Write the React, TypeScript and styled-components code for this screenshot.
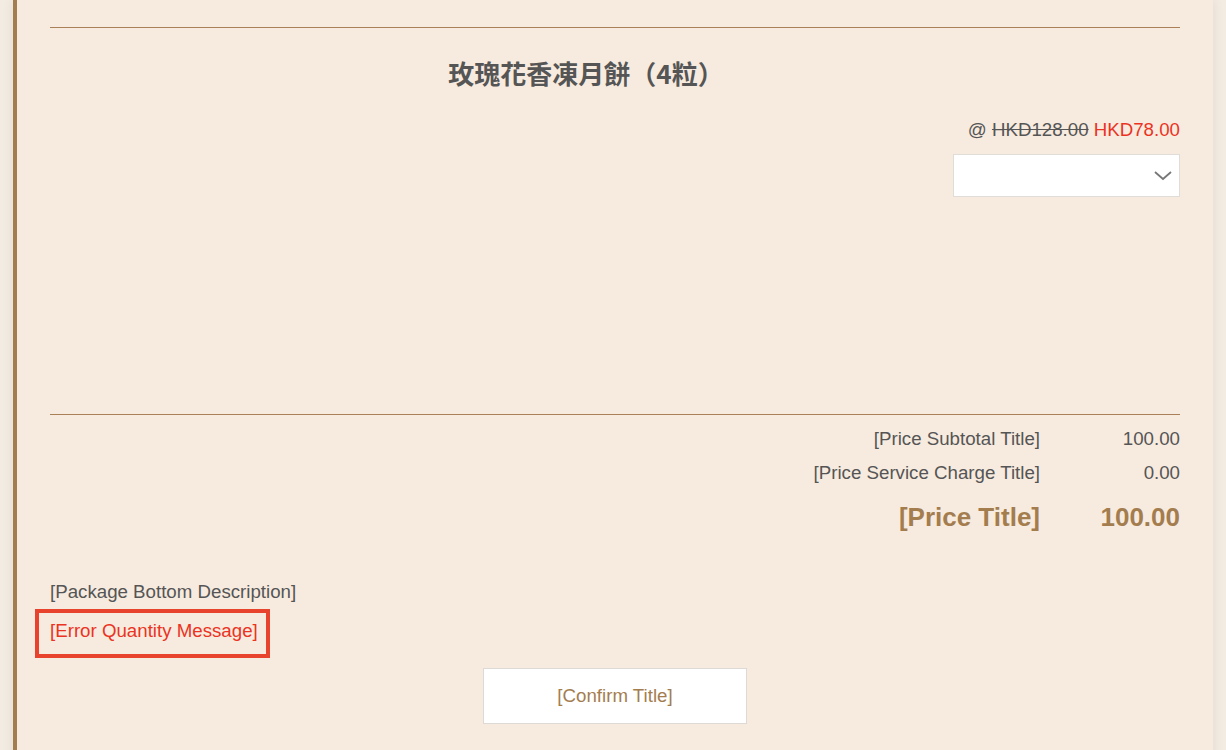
import React from 'react'
import styled, { createGlobalStyle } from 'styled-components'

const GlobalStyle = createGlobalStyle`
  html, body {
    margin: 0;
    padding: 0;
    background: #f3ece3;
    font-family: "Liberation Sans", Arial, "Noto Sans CJK TC", sans-serif;
    color: #555;
  }
`

const Shell = styled.div`
  width: 1226px;
  height: 750px;
  overflow: hidden;
  padding: 0 13px;
  box-sizing: border-box;
`

const Panel = styled.div`
  background: #f7ebdf;
  border-left: 4px solid #a47d4f;
  box-shadow: 0 0 10px rgba(120, 90, 50, 0.12);
  padding: 27px 33px 40px 33px;
  min-height: 750px;
  box-sizing: border-box;
`

const Divider = styled.hr`
  border: 0;
  border-top: 1px solid #a98058;
  margin: 0;
`

const ItemBlock = styled.div`
  height: 386px;
  display: flex;
  flex-direction: column;
`

const ItemTitle = styled.h2`
  margin: 27px 0 0;
  padding-right: 58px;
  text-align: center;
  font-family: "Noto Sans CJK TC", "Liberation Sans", sans-serif;
  font-size: 26px;
  font-weight: 700;
  line-height: 36px;
  color: #555;
`

const PriceLine = styled.div`
  margin-top: 27px;
  text-align: right;
  font-size: 18.7px;
  line-height: 24px;
`

const OldPrice = styled.span`
  text-decoration: line-through;
`

const NewPrice = styled.span`
  color: #eb3323;
`

const SelectWrap = styled.div`
  margin-top: 12px;
  align-self: flex-end;
  width: 227px;
  height: 43px;
  background: #fff;
  border: 1px solid #e0dcd7;
  box-sizing: border-box;
  display: flex;
  align-items: center;
  justify-content: flex-end;
  padding-right: 6px;
`

const Totals = styled.div`
  display: flex;
  flex-direction: column;
  gap: 10px;
  padding-top: 12px;
`

const TotalRow = styled.div<{ $big?: boolean }>`
  display: grid;
  grid-template-columns: 1fr 140px;
  align-items: center;
  height: ${({ $big }) => ($big ? '34px' : '24px')};
  margin-top: ${({ $big }) => ($big ? '5px' : '0')};
  font-size: ${({ $big }) => ($big ? '26px' : '18.7px')};
  font-weight: ${({ $big }) => ($big ? 700 : 400)};
  color: ${({ $big }) => ($big ? '#a47d4f' : '#555')};
  line-height: ${({ $big }) => ($big ? '34px' : '24px')};
`

const Label = styled.span`
  text-align: right;
`

const Value = styled.span`
  text-align: right;
`

const Description = styled.p`
  margin: 46px 0 0;
  font-size: 18.7px;
  line-height: 24px;
`

const ErrorBox = styled.div`
  margin: 5px 0 0 -15px;
  display: inline-block;
  border: 4px solid #e8432d;
  padding: 6px 8px 10px 11px;
  line-height: 24px;
`

const ErrorText = styled.span`
  color: #eb3323;
  font-size: 18.7px;
  line-height: 24px;
`

const ButtonRow = styled.div`
  display: flex;
  justify-content: center;
  margin-top: 10px;
`

const ConfirmButton = styled.button`
  width: 264px;
  height: 56px;
  background: #fff;
  border: 1px solid #ddd9d4;
  font-family: "Liberation Sans", Arial, sans-serif;
  font-size: 18.7px;
  color: #a47d4f;
  cursor: pointer;
`

const Chevron = () => (
  <svg width="20" height="12" viewBox="0 0 20 12" fill="none">
    <path d="M2 2 L10 9 L18 2" stroke="#777" strokeWidth="1.8" />
  </svg>
)

export default function App() {
  return (
    <>
      <GlobalStyle />
      <Shell>
        <Panel>
          <Divider />
          <ItemBlock>
            <ItemTitle>玫瑰花香凍月餅（4粒）</ItemTitle>
            <PriceLine>
              @ <OldPrice>HKD128.00</OldPrice> <NewPrice>HKD78.00</NewPrice>
            </PriceLine>
            <SelectWrap>
              <Chevron />
            </SelectWrap>
          </ItemBlock>
          <Divider />
          <Totals>
            <TotalRow>
              <Label>[Price Subtotal Title]</Label>
              <Value>100.00</Value>
            </TotalRow>
            <TotalRow>
              <Label>[Price Service Charge Title]</Label>
              <Value>0.00</Value>
            </TotalRow>
            <TotalRow $big>
              <Label>[Price Title]</Label>
              <Value>100.00</Value>
            </TotalRow>
          </Totals>
          <Description>[Package Bottom Description]</Description>
          <ErrorBox>
            <ErrorText>[Error Quantity Message]</ErrorText>
          </ErrorBox>
          <ButtonRow>
            <ConfirmButton>[Confirm Title]</ConfirmButton>
          </ButtonRow>
        </Panel>
      </Shell>
    </>
  )
}
